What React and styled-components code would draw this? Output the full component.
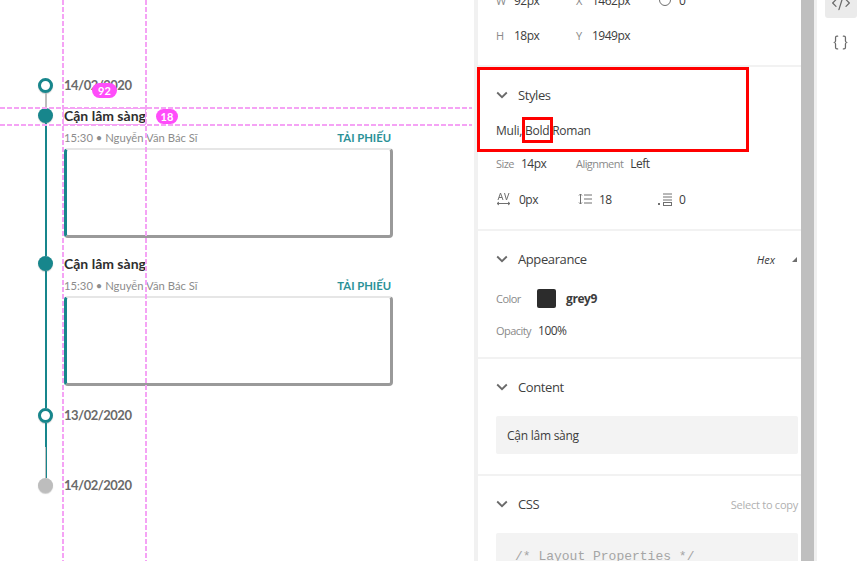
import styled, { createGlobalStyle } from 'styled-components';
import { Braces, CodeXml } from 'lucide-react';

const GlobalStyle = createGlobalStyle`
  html, body {
    margin: 0;
    padding: 0;
    width: 864px;
    height: 561px;
    overflow: hidden;
    background: #fff;
  }
`;

const TEAL = '#17868c';
const PINK = '#f5a3f5';
const MAGENTA = '#ff4dfa';

export default function App() {
  return (
    <Page>
      <GlobalStyle />
      <Canvas>
        <Timeline>
          <DateRow label="14/02/2020" height={30} line="#bdbdbd" />
          <DetailRow height={148} />
          <DetailRow height={152} />
          <DateRow label="13/02/2020" height={70} line={TEAL} fading />
          <DateRow label="14/02/2020" height={30} muted />
        </Timeline>

        <VGuide $left={62} />
        <VGuide $left={145} />
        <HGuide $top={107} />
        <HGuide $top={124} />
        <Selection />
        <Badge $left={92} $top={83} $width={25}>92</Badge>
        <Badge $left={156} $top={109} $width={22}>18</Badge>
      </Canvas>

      <Gutter />

      <Panel>
        <LayoutSection>
          <ValueRow>
            <Field><Key $width={11}>W</Key><Value>92px</Value></Field>
            <Field><Key $width={9}>X</Key><Value>1462px</Value></Field>
            <Field><RotateIcon /><Value>0</Value></Field>
          </ValueRow>
          <ValueRow>
            <Field><Key $width={11}>H</Key><Value>18px</Value></Field>
            <Field><Key $width={9}>Y</Key><Value>1949px</Value></Field>
          </ValueRow>
        </LayoutSection>

        <StylesSection>
          <Heading title="Styles" />
          <FontName>Muli, Bold Roman</FontName>
          <ValueRow>
            <Field><Key>Size</Key><Value>14px</Value></Field>
            <Field><Key>Alignment</Key><Value>Left</Value></Field>
          </ValueRow>
          <MetricRow>
            <Field><TrackingIcon /><Value>0px</Value></Field>
            <Field><LeadingIcon /><Value>18</Value></Field>
            <Field><ParagraphIcon /><Value>0</Value></Field>
          </MetricRow>
        </StylesSection>

        <AppearanceSection>
          <Heading title="Appearance" aside={<HexToggle>Hex<Corner /></HexToggle>} />
          <ColorRow>
            <Key $width={41}>Color</Key>
            <Swatch />
            <ColorName>grey9</ColorName>
          </ColorRow>
          <Field><Key>Opacity</Key><Value>100%</Value></Field>
        </AppearanceSection>

        <ContentSection>
          <Heading title="Content" />
          <ContentBox>Cận lâm sàng</ContentBox>
        </ContentSection>

        <CssSection>
          <Heading title="CSS" aside={<CopyHint>Select to copy</CopyHint>} />
          <CodeBox>/* Layout Properties */</CodeBox>
        </CssSection>

        <Annotation $left={-1} $top={67} $width={272} $height={85} />
        <Annotation $left={44} $top={117} $width={31} $height={26} />
      </Panel>

      <Scrollbar />

      <ToolRail>
        <ToolTab $active><CodeXml size={20} strokeWidth={1.5} /></ToolTab>
        <ToolTab><Braces size={17} strokeWidth={1.75} /></ToolTab>
      </ToolRail>
    </Page>
  );
}

function DateRow({ label, height, line, muted, fading }) {
  return (
    <Row $height={height}>
      <Rail>
        {muted ? <SolidDot $color="#bdbdbd" /> : <RingDot />}
        {line && <RailLine $color={line} $short={fading} />}
        {fading && <FadingLine />}
      </Rail>
      <DateLabel>{label}</DateLabel>
    </Row>
  );
}

function DetailRow({ height }) {
  return (
    <Row $height={height}>
      <Rail>
        <SolidDot $color={TEAL} />
        <RailLine $color={TEAL} />
      </Rail>
      <Detail>
        <Title>Cận lâm sàng</Title>
        <MetaRow>
          <Meta>15:30 • Nguyễn Văn Bác Sĩ</Meta>
          <Download>TẢI PHIẾU</Download>
        </MetaRow>
        <Card />
      </Detail>
    </Row>
  );
}

function Heading({ title, aside }) {
  return (
    <HeadingRow>
      <svg width="12" height="8" viewBox="0 0 12 8" fill="none">
        <path d="M1.200 1.500 6 6.200l4.800-4.700" stroke="#6a6a6a" strokeWidth="1.800" />
      </svg>
      <HeadingText>{title}</HeadingText>
      {aside}
    </HeadingRow>
  );
}

function RotateIcon() {
  return (
    <svg width="14" height="14" viewBox="0 0 14 14" fill="none">
      <circle cx="7" cy="7" r="5.500" stroke="#6e6e6e" />
      <path d="M7 4v3" stroke="#6e6e6e" />
    </svg>
  );
}

function TrackingIcon() {
  return (
    <svg width="16" height="14" viewBox="0 0 16 14" fill="none" stroke="#707070">
      <path d="M2 8 4.500 1 7 8M3 5.500h3M8.500 1l2 7 2.500-7" />
      <path d="M1 11.500h13M3 10l-2 1.500L3 13M12 10l2 1.500-2 1.500" />
    </svg>
  );
}

function LeadingIcon() {
  return (
    <svg width="16" height="12" viewBox="-2 0 16 12" fill="none" stroke="#707070">
      <path d="M2.500 1v10M1 2.500 2.500 1 4 2.500M1 9.500 2.500 11 4 9.500" />
      <path d="M6 2h8M6 6h8M6 10h8" />
    </svg>
  );
}

function ParagraphIcon() {
  return (
    <svg width="14" height="13" viewBox="0 0 14 13" fill="none" stroke="#707070">
      <path d="M5 1h9M5 4h9M5 7h9" />
      <rect x="5.500" y="9.500" width="8" height="3" />
      <path d="M0 11h2" strokeWidth="2" />
    </svg>
  );
}

const Page = styled.div`
  display: flex;
  width: 864px;
  height: 561px;
  overflow: hidden;
  background: #fff;
`;

const Canvas = styled.div`
  position: relative;
  flex: 0 0 474px;
  height: 561px;
`;

const Timeline = styled.div`
  display: flex;
  flex-direction: column;
  padding: 78px 0 0 38px;
  font-family: Lato, 'Noto Sans', sans-serif;
`;

const Row = styled.div`
  display: flex;
  gap: 11px;
  height: ${(props) => props.$height}px;
`;

const Rail = styled.div`
  display: flex;
  flex-direction: column;
  align-items: center;
  width: 15px;
`;

const RingDot = styled.span`
  flex: none;
  box-sizing: border-box;
  width: 15px;
  height: 15px;
  border: 3px solid ${TEAL};
  border-radius: 50%;
  background: #fff;
  box-shadow: 0 1px 1px rgba(0, 0, 0, 0.2);
`;

const SolidDot = styled.span`
  flex: none;
  width: 15px;
  height: 15px;
  border-radius: 50%;
  background: ${(props) => props.$color};
  box-shadow: 0 1px 1px rgba(0, 0, 0, 0.2);
`;

const RailLine = styled.span`
  flex: ${(props) => (props.$short ? '0 0 24px' : '1')};
  width: 2px;
  background: ${(props) => props.$color};
`;

const FadingLine = styled.span`
  flex: 1;
  width: 2px;
  background: linear-gradient(90deg, #bdbdbd 50%, ${TEAL} 50%);
`;

const DateLabel = styled.div`
  color: #6a6a6a;
  font-size: 13px;
  font-weight: 700;
  letter-spacing: -0.5px;
  line-height: 15px;
`;

const Detail = styled.div`
  display: flex;
  flex-direction: column;
  width: 329px;
`;

const Title = styled.div`
  color: #2e2e2e;
  font-size: 14px;
  font-weight: 700;
  line-height: 16px;
`;

const MetaRow = styled.div`
  display: flex;
  justify-content: space-between;
  margin: 6px 2px 2px 0;
  line-height: 16px;
`;

const Meta = styled.span`
  color: #8c8c8c;
  font-size: 11.25px;
`;

const Download = styled.span`
  color: #2a9197;
  font-size: 11.25px;
  font-weight: 700;
`;

const Card = styled.div`
  box-sizing: border-box;
  height: 90px;
  background: #fff;
  border-style: solid;
  border-width: 2px 3px 3px 3px;
  border-color: #e6e6e6 #9a9a9a #9a9a9a ${TEAL};
  border-radius: 4px;
`;

const VGuide = styled.div`
  position: absolute;
  top: 0;
  bottom: 0;
  left: ${(props) => props.$left}px;
  width: 2px;
  background: repeating-linear-gradient(180deg, ${PINK} 0 5px, transparent 5px 7px);
`;

const HGuide = styled.div`
  position: absolute;
  left: 0;
  right: 2px;
  top: ${(props) => props.$top}px;
  height: 2px;
  background: repeating-linear-gradient(90deg, ${PINK} 0 5px, transparent 5px 7px);
`;

const Selection = styled.div`
  position: absolute;
  left: 63px;
  top: 108px;
  width: 83px;
  height: 17px;
  box-sizing: border-box;
  border: 1px solid ${PINK};
`;

const Badge = styled.div`
  position: absolute;
  left: ${(props) => props.$left}px;
  top: ${(props) => props.$top}px;
  width: ${(props) => props.$width}px;
  height: 15px;
  border-radius: 8px;
  background: ${MAGENTA};
  color: #fff;
  font-family: Lato, sans-serif;
  font-size: 11px;
  font-weight: 700;
  line-height: 15px;
  text-align: center;
`;

const Gutter = styled.div`
  flex: 0 0 4px;
  background: #f1f1f1;
`;

const Panel = styled.div`
  position: relative;
  flex: 0 0 323px;
  height: 561px;
  font-family: 'Open Sans', Lato, sans-serif;
  color: #3c3c3c;
  font-size: 12px;
  letter-spacing: -0.25px;
`;

const Section = styled.section`
  box-sizing: border-box;
  padding-left: 18px;
  padding-right: 3px;
  border-bottom: 2px solid #f2f2f2;
`;

const LayoutSection = styled(Section)`
  height: 67px;
  display: flex;
  flex-direction: column;
  justify-content: flex-end;
  gap: 19px;
  padding-bottom: 22px;
`;

const StylesSection = styled(Section)`
  height: 164px;
  padding-top: 19px;
`;

const AppearanceSection = styled(Section)`
  height: 128px;
  padding-top: 19px;
`;

const ContentSection = styled(Section)`
  height: 117px;
  padding-top: 19px;
`;

const CssSection = styled(Section)`
  padding-top: 19px;
  border-bottom: none;
`;

const HeadingRow = styled.div`
  display: flex;
  align-items: center;
  gap: 10px;
  height: 18px;
`;

const HeadingText = styled.span`
  flex: 1;
  font-size: 13px;
  letter-spacing: -0.4px;
  color: #3f3f3f;
`;

const FontName = styled.div`
  margin: 18px 0 15px;
  line-height: 18px;
  color: #3c3c3c;
`;

const ValueRow = styled.div`
  display: grid;
  grid-template-columns: 80px 82px auto;
  height: 16px;
`;

const MetricRow = styled(ValueRow)`
  margin-top: 20px;
`;

const Field = styled.div`
  display: flex;
  align-items: center;
  gap: 7px;
  height: 16px;
`;

const Key = styled.span`
  flex: none;
  width: ${(props) => (props.$width ? `${props.$width}px` : 'auto')};
  color: #8a8a8a;
  font-size: 11px;
  letter-spacing: -0.55px;
`;

const Value = styled.span`
  color: #3c3c3c;
  font-size: 12px;
  letter-spacing: -0.5px;
`;

const HexToggle = styled.span`
  display: flex;
  align-items: center;
  gap: 17px;
  color: #3c3c3c;
  font-size: 11px;
  font-style: italic;
  letter-spacing: 0;
`;

const Corner = styled.i`
  width: 0;
  height: 0;
  margin-right: 1px;
  border-style: solid;
  border-width: 0 0 5px 5px;
  border-color: transparent transparent #6e6e6e transparent;
`;

const ColorRow = styled.div`
  display: flex;
  align-items: center;
  height: 20px;
  margin: 20px 0 14px;
`;

const Swatch = styled.span`
  width: 19px;
  height: 19px;
  margin-right: 10px;
  border-radius: 2px;
  background: #2c2c2c;
`;

const ColorName = styled.span`
  font-weight: 700;
  letter-spacing: -0.4px;
  color: #3c3c3c;
`;

const ContentBox = styled.div`
  box-sizing: border-box;
  height: 38px;
  margin-top: 20px;
  padding: 1px 11px 0;
  border-radius: 2px;
  background: #f3f3f3;
  line-height: 37px;
`;

const CopyHint = styled.span`
  color: #b0b0b0;
  font-size: 11px;
`;

const CodeBox = styled.div`
  box-sizing: border-box;
  height: 40px;
  margin-top: 20px;
  padding: 16px 19px 0;
  border-radius: 2px;
  background: #f3f3f3;
  color: #a5a5a5;
  font-family: 'Liberation Mono', monospace;
  font-size: 13px;
  letter-spacing: 0;
  line-height: 16px;
`;

const Annotation = styled.div`
  position: absolute;
  left: ${(props) => props.$left}px;
  top: ${(props) => props.$top}px;
  width: ${(props) => props.$width}px;
  height: ${(props) => props.$height}px;
  box-sizing: border-box;
  border: 3px solid #f00;
`;

const Scrollbar = styled.div`
  flex: 0 0 13px;
  background: #bfbfbf;
  border-right: 3px solid #f0f0f0;
`;

const ToolRail = styled.div`
  flex: 1;
  display: flex;
  flex-direction: column;
  align-items: center;
  gap: 8px;
  color: #6a6a6a;
`;

const ToolTab = styled.div`
  box-sizing: border-box;
  display: flex;
  align-items: flex-end;
  justify-content: center;
  width: 32px;
  height: ${(props) => (props.$active ? '18px' : 'auto')};
  border-radius: 0 0 3px 3px;
  background: ${(props) => (props.$active ? '#ebebeb' : 'transparent')};
  padding-bottom: ${(props) => (props.$active ? '5px' : '0')};
  padding-top: ${(props) => (props.$active ? '0' : '8px')};
`;
